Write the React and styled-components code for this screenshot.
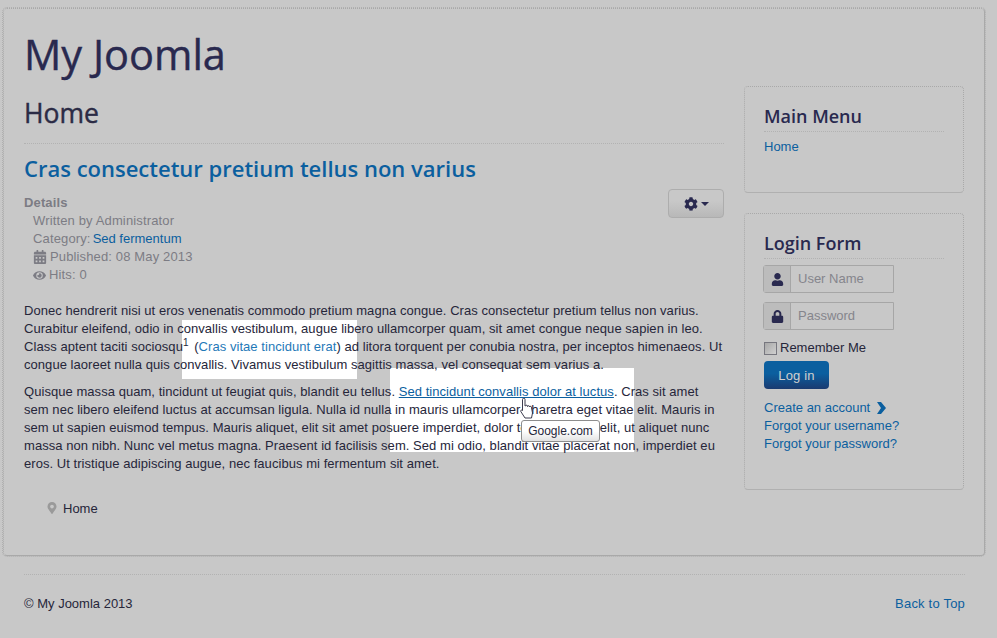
import styled, { createGlobalStyle } from "styled-components";
import { FaCalendarAlt, FaCog, FaEye, FaLock, FaMapMarkerAlt, FaUser } from "react-icons/fa";

const navy = "#29294f";
const link = "#0b5f9f";
const serifless = `"Liberation Sans", Arial, sans-serif`;
const heading = `"Open Sans", "Noto Sans", sans-serif`;

const GlobalStyle = createGlobalStyle`
  html, body {
    margin: 0;
    padding: 0;
    background: #c8c8c8;
  }
  body {
    font-family: ${serifless};
    font-size: 13px;
    line-height: 18px;
    color: #26263a;
  }
  * { box-sizing: border-box; }
`;

const Page = styled.div`
  width: 997px;
  height: 638px;
  overflow: hidden;
  padding: 8px 12px 0 3px;
`;

const Panel = styled.div`
  height: 548px;
  padding: 20px 20px 0 20px;
  border: 1px solid #b6b6b6;
  border-top-style: dotted;
  border-left-style: dotted;
  border-color: #a9a9a9;
  border-radius: 4px;
  outline: 1px dotted #b0b0b0;
  display: flex;
  flex-direction: column;
`;

const Brand = styled.div`
  font-family: ${heading};
  font-size: 41.5px;
  font-weight: 400;
  -webkit-text-stroke: 0.4px ${navy};
  line-height: 50px;
  color: ${navy};
`;

const Columns = styled.div`
  display: flex;
  gap: 20px;
  margin-top: 7px;
`;

const Main = styled.main`
  width: 700px;
`;

const PageTitle = styled.h1`
  margin: 0;
  padding: 8px 0 0;
  height: 58px;
  font-family: ${heading};
  font-weight: 400;
  -webkit-text-stroke: 0.4px #2b2b45;
  font-size: 26.5px;
  line-height: 38px;
  color: #2b2b45;
  border-bottom: 1px dotted #b2b2b2;
`;

const ArticleTitle = styled.h2`
  margin: 0;
  padding-top: 8px;
  font-family: ${heading};
  font-weight: 600;
  font-size: 22px;
  line-height: 32px;
  color: ${link};
`;

const MetaRow = styled.div`
  position: relative;
  margin-top: 10px;
  letter-spacing: 0.14px;
  color: #7c7c84;
`;

const MetaTitle = styled.div`
  font-weight: 700;
`;

const MetaLine = styled.div`
  padding-left: 9px;
  display: flex;
  align-items: center;
  gap: 3px;
  a {
    color: ${link};
    margin-left: -1px;
    letter-spacing: 0;
  }
`;

const GearButton = styled.button`
  position: absolute;
  top: -5px;
  right: 0;
  width: 56px;
  height: 29px;
  padding: 0;
  display: flex;
  align-items: center;
  justify-content: center;
  gap: 3px;
  color: ${navy};
  font-size: 14px;
  background: linear-gradient(#c8c8c8 40%, #b8b8b8);
  border: 1px solid #adadad;
  border-radius: 4px;
`;

const Caret = styled.span`
  width: 0;
  height: 0;
  border-left: 4px solid transparent;
  border-right: 4px solid transparent;
  border-top: 4px solid ${navy};
`;

const Body = styled.div`
  position: relative;
  margin-top: 18px;
  letter-spacing: 0.05px;
`;

const Spotlight = styled.div`
  position: absolute;
  left: ${({ $x }) => $x}px;
  top: ${({ $y }) => $y}px;
  width: ${({ $w }) => $w}px;
  height: ${({ $h }) => $h}px;
  background: #fff;
`;

const Para = styled.p`
  position: relative;
  margin: 0 0 9px;
  sup {
    font-size: 10px;
    line-height: 0;
    padding-right: 2px;
  }
`;

const LightLink = styled.a`
  color: #1f79b8;
`;

const UnderLink = styled.a`
  color: ${link};
  text-decoration: underline;
`;

const Tooltip = styled.div`
  position: absolute;
  left: 497px;
  top: 118px;
  width: 79px;
  height: 22px;
  font-size: 12px;
  letter-spacing: 0;
  line-height: 20px;
  text-align: center;
  background: linear-gradient(#fff 50%, #e2e2e2);
  border: 1px solid #8d8d8d;
  border-radius: 3px;
  color: #26263a;
`;

const Cursor = styled.svg`
  position: absolute;
  left: 496px;
  top: 96px;
`;

const Breadcrumb = styled.div`
  margin-top: 27px;
  padding-left: 22px;
  display: flex;
  align-items: center;
  gap: 5px;
  svg {
    color: #9a9a9a;
    margin-top: -3px;
  }
`;

const Sidebar = styled.aside`
  width: 220px;
  display: flex;
  flex-direction: column;
  gap: 20px;
`;

const Module = styled.section`
  height: ${({ $h }) => $h}px;
  padding: 15px 19px;
  border: 1px dotted #a9a9a9;
  border-bottom: 1px solid #b0b0b0;
  border-radius: 4px;
`;

const ModuleTitle = styled.h3`
  margin: 0 0 6px;
  height: 30px;
  font-family: ${heading};
  font-weight: 600;
  font-size: 18px;
  line-height: 28px;
  color: ${navy};
  border-bottom: 1px dotted #b2b2b2;
`;

const MenuLink = styled.a`
  color: ${link};
`;

const Field = styled.div`
  display: flex;
  width: 131px;
  height: 28px;
  margin: 0 0 9px -1px;
  border: 1px solid #a6a6a6;
  border-radius: 3px 0 0 3px;
`;

const AddOn = styled.span`
  width: 27px;
  display: flex;
  align-items: center;
  justify-content: center;
  font-size: 13px;
  color: ${navy};
  background: #bcbcbc;
  border-right: 1px solid #a6a6a6;
`;

const Placeholder = styled.span`
  padding-left: 7px;
  line-height: 26px;
  color: #85858c;
`;

const Remember = styled.label`
  display: flex;
  align-items: center;
  gap: 3px;
  height: 18px;
`;

const CheckBox = styled.span`
  width: 13px;
  height: 13px;
  background: linear-gradient(135deg, #a8a8a8, #d0d0d0);
  border: 1px solid #77777f;
`;

const LoginButton = styled.button`
  display: block;
  width: 65px;
  height: 28px;
  margin: 4px 0 10px;
  padding: 0;
  font-family: ${serifless};
  font-size: 13px;
  letter-spacing: 0.17px;
  color: #d0d0d0;
  background: linear-gradient(#0b5f9f 45%, #1a3a70);
  border: none;
  border-radius: 4px;
`;

const LinkLine = styled.div`
  display: flex;
  align-items: center;
  gap: 6px;
  a {
    color: ${link};
  }
  svg {
    color: ${link};
  }
`;

const Footer = styled.footer`
  margin: 18px 0 0 21px;
  padding-top: 20px;
  width: 941px;
  display: flex;
  justify-content: space-between;
  border-top: 1px dotted #b2b2b2;
  a {
    color: ${link};
    letter-spacing: 0.2px;
  }
`;

const App = () => {
  return (
    <Page>
      <GlobalStyle />
      <Panel>
        <Brand>My Joomla</Brand>
        <Columns>
          <Main>
            <PageTitle>Home</PageTitle>
            <ArticleTitle>Cras consectetur pretium tellus non varius</ArticleTitle>
            <MetaRow>
              <MetaTitle>Details</MetaTitle>
              <MetaLine>Written by Administrator</MetaLine>
              <MetaLine>
                Category: <a>Sed fermentum</a>
              </MetaLine>
              <MetaLine>
                <FaCalendarAlt size={14} /> Published: 08 May 2013
              </MetaLine>
              <MetaLine>
                <FaEye size={13} /> Hits: 0
              </MetaLine>
              <GearButton>
                <FaCog />
                <Caret />
              </GearButton>
            </MetaRow>
            <Body>
              <Spotlight $x={158} $y={18} $w={175} $h={59} />
              <Spotlight $x={366} $y={66} $w={244} $h={84} />
              <Para>
                Donec hendrerit nisi ut eros venenatis commodo pretium magna congue. Cras
                consectetur pretium tellus non varius. Curabitur eleifend, odio in convallis
                vestibulum, augue libero ullamcorper quam, sit amet congue neque sapien in leo.
                Class aptent taciti sociosqu<sup>1</sup> (
                <LightLink>Cras vitae tincidunt erat</LightLink>) ad litora torquent per conubia
                nostra, per inceptos himenaeos. Ut congue laoreet nulla quis convallis. Vivamus
                vestibulum sagittis massa, vel consequat sem varius a.
              </Para>
              <Para>
                Quisque massa quam, tincidunt ut feugiat quis, blandit eu tellus.{" "}
                <UnderLink>Sed tincidunt convallis dolor at luctus</UnderLink>. Cras sit amet sem
                nec libero eleifend luctus at accumsan ligula. Nulla id nulla in mauris
                ullamcorper pharetra eget vitae elit. Mauris in sem ut sapien euismod tempus.
                Mauris aliquet, elit sit amet posuere imperdiet, dolor tellus sodales elit, ut
                aliquet nunc massa non nibh. Nunc vel metus magna. Praesent id facilisis sem. Sed
                mi odio, blandit vitae placerat non, imperdiet eu eros. Ut tristique adipiscing
                augue, nec faucibus mi fermentum sit amet.
              </Para>
              <Cursor width="14" height="22" viewBox="0 0 14 22">
                <path
                  d="M2.500 1.500a1.200 1.200 0 0 1 2.500 0V8h.5a1 1 0 0 1 2 .5 1 1 0 0 1 2 .5 1 1 0 0 1 2 .8L12.500 15l-1 5H5L.8 13.500c-.6-1 .7-2 1.700-1V1.500z"
                  fill="#fff"
                  stroke="#26263a"
                  strokeWidth="0.9"
                />
              </Cursor>
              <Tooltip>Google.com</Tooltip>
            </Body>
            <Breadcrumb>
              <FaMapMarkerAlt size={12} />
              Home
            </Breadcrumb>
          </Main>
          <Sidebar>
            <Module $h={107}>
              <ModuleTitle>Main Menu</ModuleTitle>
              <MenuLink>Home</MenuLink>
            </Module>
            <Module $h={277}>
              <ModuleTitle>Login Form</ModuleTitle>
              <Field>
                <AddOn>
                  <FaUser />
                </AddOn>
                <Placeholder>User Name</Placeholder>
              </Field>
              <Field>
                <AddOn>
                  <FaLock />
                </AddOn>
                <Placeholder>Password</Placeholder>
              </Field>
              <Remember>
                <CheckBox />
                Remember Me
              </Remember>
              <LoginButton>Log in</LoginButton>
              <LinkLine>
                <a>Create an account</a>
                <svg width="11" height="12" viewBox="0 0 11 12">
                  <path d="M1 0h4l5 6-5 6H1l4-6z" fill="currentColor" />
                </svg>
              </LinkLine>
              <LinkLine>
                <a>Forgot your username?</a>
              </LinkLine>
              <LinkLine>
                <a>Forgot your password?</a>
              </LinkLine>
            </Module>
          </Sidebar>
        </Columns>
      </Panel>
      <Footer>
        <span>© My Joomla 2013</span>
        <a>Back to Top</a>
      </Footer>
    </Page>
  );
};

export default App;
